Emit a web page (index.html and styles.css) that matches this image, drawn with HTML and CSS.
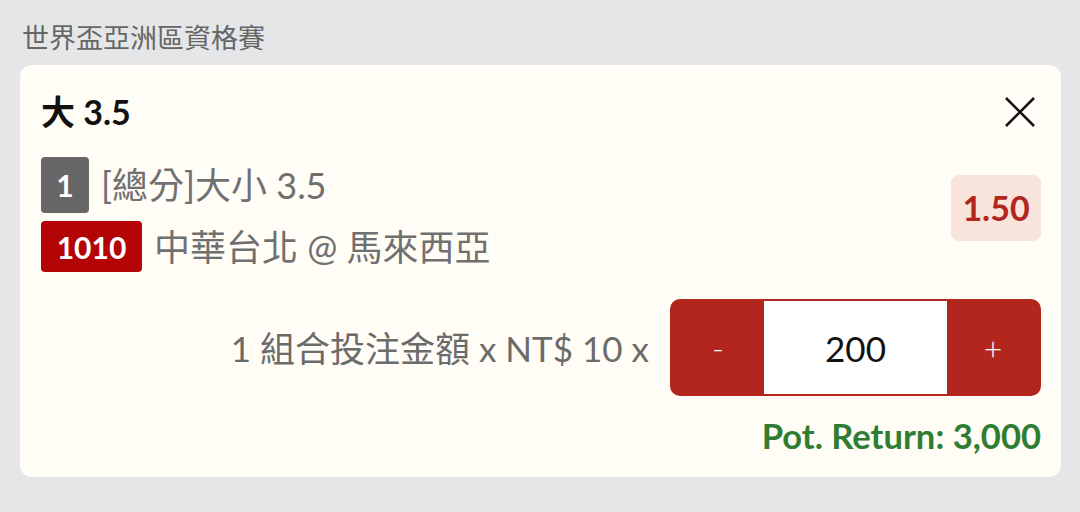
FILE: index.html
```html
<!DOCTYPE html>
<html lang="zh-Hant">
<head>
    <meta charset="UTF-8">
    <title>Bet Slip</title>
    <link rel="stylesheet" href="styles.css">
</head>
<body>
<div class="league">世界盃亞洲區資格賽</div>

<div class="card">
    <header class="title-row">
        <h1 class="pick">大 3.5</h1>
        <button class="close" aria-label="close">
            <svg width="32" height="32" viewBox="0 0 32 32">
                <path d="M2 2 L30 30 M30 2 L2 30" stroke="#111" stroke-width="2.6" fill="none"/>
            </svg>
        </button>
    </header>

    <section class="selection">
        <div class="lines">
            <div class="line">
                <span class="tag tag-gray">1</span>
                <span class="line-text">[總分]大小 3.5</span>
            </div>
            <div class="line">
                <span class="tag tag-red">1010</span>
                <span class="line-text">中華台北 @ 馬來西亞</span>
            </div>
        </div>
        <div class="odds">1.50</div>
    </section>

    <section class="stake-row">
        <span class="stake-label">1 組合投注金額 x NT$ 10 x</span>
        <div class="stepper">
            <button class="step">-</button>
            <div class="amount">200</div>
            <button class="step">+</button>
        </div>
    </section>

    <footer class="return">Pot. Return: 3,000</footer>
</div>
</body>
</html>
```

FILE: styles.css
```css
body {
    margin: 0;
    padding: 0 19px 0 20px;
    background: #e5e6e8;
    font-family: Lato, "Noto Sans CJK TC", sans-serif;
    height: 512px;
}

.league {
    padding: 20px 0 0 2px;
    height: 65px;
    box-sizing: border-box;
    font-size: 27px;
    line-height: 36px;
    color: #666;
}

.card {
    background: #fffdf5;
    border-radius: 12px;
    padding: 17px 20px 21px 21px;
}

.title-row {
    display: flex;
    justify-content: space-between;
    align-items: center;
    height: 60px;
}

.pick {
    margin: 0;
    font-size: 34px;
    line-height: 40px;
    font-weight: 700;
    color: #111;
}

.close {
    border: none;
    background: none;
    padding: 0;
    margin-right: 5px;
    width: 32px;
    height: 32px;
}

.selection {
    margin-top: 15px;
    display: flex;
    justify-content: space-between;
    align-items: center;
}

.lines {
    display: flex;
    flex-direction: column;
    gap: 8px;
}

.line {
    display: flex;
    align-items: center;
    gap: 12px;
}

.tag {
    display: flex;
    align-items: center;
    justify-content: center;
    color: #fff;
    font-weight: 700;
    border-radius: 4px;
}

.tag-gray {
    width: 48px;
    height: 56px;
    background: #666;
    font-size: 30px;
}

.tag-red {
    width: 101px;
    height: 51px;
    background: #b30505;
    font-size: 30px;
}

.line-text {
    font-size: 36px;
    line-height: 44px;
    color: #707070;
}

.odds {
    width: 90px;
    height: 66px;
    margin-bottom: 14px;
    background: #f9e4dc;
    border-radius: 8px;
    display: flex;
    align-items: center;
    justify-content: center;
    font-size: 34px;
    font-weight: 700;
    color: #b3261e;
}

.stake-row {
    margin-top: 27px;
    display: flex;
    justify-content: flex-end;
    align-items: center;
    gap: 21px;
}

.stake-label {
    font-size: 35px;
    line-height: 44px;
    color: #6b6b6b;
}

.stepper {
    display: flex;
    width: 371px;
    height: 97px;
    box-sizing: border-box;
    border: 2px solid #b3261e;
    border-radius: 10px;
    overflow: hidden;
    background: #b3261e;
}

.step {
    width: 92px;
    border: none;
    background: #b3261e;
    color: #fff;
    font-family: Lato, sans-serif;
    font-size: 32px;
    font-weight: 300;
    padding: 0;
}

.amount {
    flex: 1;
    background: #fff;
    display: flex;
    align-items: center;
    justify-content: center;
    font-size: 35px;
    color: #111;
}

.return {
    margin-top: 20px;
    text-align: right;
    font-size: 34.6px;
    line-height: 40px;
    font-weight: 700;
    color: #2e7d32;
}
```
